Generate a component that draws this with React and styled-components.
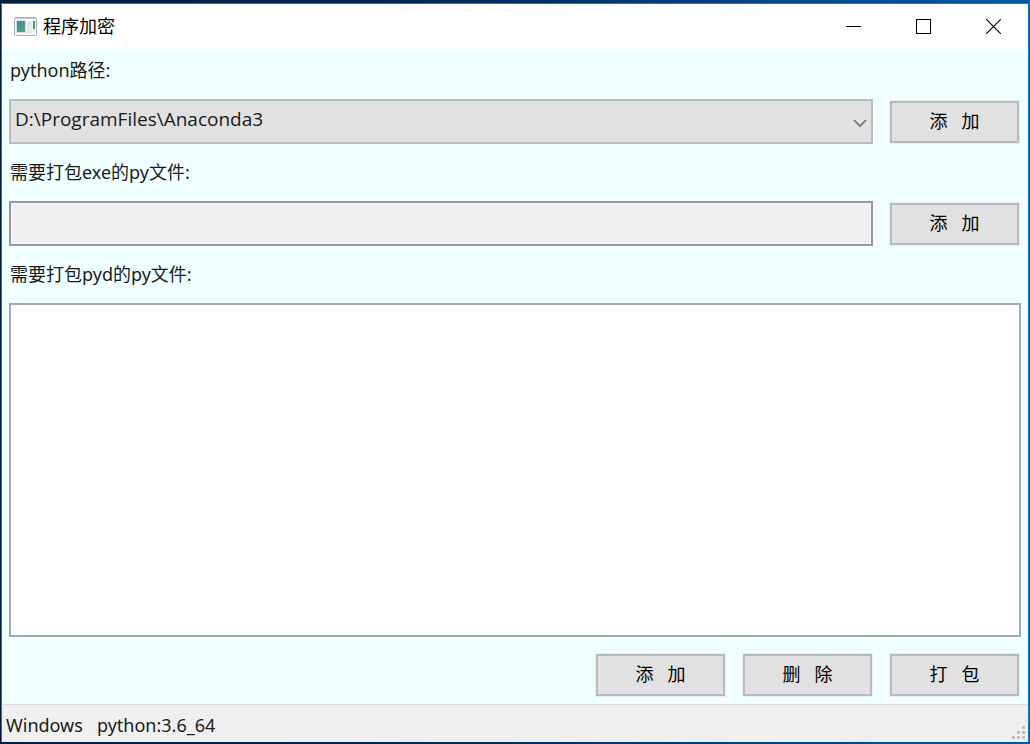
import React, { useState } from "react";
import styled, { createGlobalStyle } from "styled-components";

const GlobalStyle = createGlobalStyle`
  *, *::before, *::after { box-sizing: border-box; }
  body {
    margin: 0;
    color: #1a1a1a;
    font-family: "Noto Sans", "Noto Sans CJK SC", sans-serif;
    font-size: 18px;
    line-height: 24px;
  }
`;

const Desktop = styled.div`
  display: flex;
  min-height: 100vh;
  padding: 3px 1px 2px;
  background: linear-gradient(90deg, #001c40 0%, #002a58 45%, #00509a 88%, #0058a8 100%);
`;

const Window = styled.main`
  display: flex;
  flex: 1;
  flex-direction: column;
  min-width: 0;
  border: 1px solid #1877c9;
  border-bottom: 0;
  background: #f0ffff;
`;

const TitleBar = styled.header`
  display: flex;
  align-items: stretch;
  height: 46px;
  padding-bottom: 2px;
  background: #ffffff;
`;

const Title = styled.h1`
  display: flex;
  flex: 1;
  align-items: center;
  gap: 6px;
  margin: 0;
  padding-left: 12px;
  color: #000000;
  font-size: 18px;
  font-weight: 400;
`;

const CaptionButton = styled.button`
  display: flex;
  align-items: center;
  justify-content: center;
  width: 70px;
  padding: 0;
  border: 0;
  background: transparent;
  &:hover { background: ${(p) => (p.$danger ? "#e81123" : "#e5e5e5")}; }
`;

const Form = styled.form`
  display: flex;
  flex: 1;
  flex-direction: column;
  gap: 16px;
  padding: 8px 7px 7px;
`;

const Label = styled.label`
  padding-left: 1px;
  line-height: 25px;
`;

const Row = styled.div`
  display: flex;
  align-items: flex-end;
  justify-content: flex-end;
  gap: 16px;
  padding-right: 1px;
`;

const SelectWrap = styled.div`
  position: relative;
  display: flex;
  flex: 1;
  min-width: 0;
`;

const Select = styled.select`
  appearance: none;
  width: 100%;
  height: 45px;
  padding: 0 32px 6px 4px;
  border: 2px solid #b9bcbc;
  border-radius: 0;
  background: #e1e1e1;
  color: inherit;
  font-family: "Open Sans", "Noto Sans CJK SC", sans-serif;
  font-size: 19px;
`;

const Chevron = styled.svg`
  position: absolute;
  top: 20px;
  right: 6px;
  pointer-events: none;
`;

const TextField = styled.input`
  flex: 1;
  min-width: 0;
  height: 45px;
  padding: 0 5px;
  border: 2px solid #969a9c;
  border-radius: 0;
  background: #f0f0f0;
  box-shadow: inset 0 0 0 1px #f8f8f8;
  color: inherit;
  font: inherit;
`;

const FileList = styled.textarea`
  flex: 1;
  min-height: 120px;
  padding: 5px;
  border: 2px solid #a3aab1;
  border-radius: 0;
  background: #ffffff;
  color: inherit;
  font: inherit;
  resize: none;
`;

const PushButton = styled.button`
  width: 131px;
  height: 44px;
  padding: 0 0 2px;
  border: 1px solid #e8f1f1;
  background: #e1e1e1;
  box-shadow: inset 0 0 0 2px #bababa;
  color: #000000;
  font: inherit;
  white-space: pre;
  &:active { background: #cce4f7; }
`;

const StatusBar = styled.footer`
  display: flex;
  align-items: center;
  justify-content: space-between;
  height: 38px;
  padding: 2px 3px 0 4px;
  border-top: 1px solid #d9dede;
  background: #f0f0f0;
  white-space: pre;
`;

const Grip = styled.svg`
  align-self: flex-end;
  margin-bottom: 3px;
`;

function AppIcon() {
  return (
    <svg width="23" height="19" viewBox="0 0 23 19" aria-hidden="true">
      <defs>
        <linearGradient id="screen" x1="0" y1="0" x2="1" y2="1">
          <stop offset="0" stopColor="#4282a8" />
          <stop offset="1" stopColor="#57aa70" />
        </linearGradient>
      </defs>
      <rect x="0.5" y="0.5" width="22" height="18" rx="1" fill="#f5f6f7" stroke="#a9afb4" />
      <path d="M1 1.500H22" stroke="#c2c8cc" />
      <rect x="2.500" y="3.500" width="9" height="12" fill="url(#screen)" stroke="#d9e3e5" />
      <rect x="13" y="4" width="5" height="7" fill="#e6e8e9" />
      <rect x="13" y="12" width="5" height="4" fill="#e6e8e9" />
      <rect x="19" y="4" width="2" height="8" fill="url(#screen)" />
      <rect x="19" y="12" width="2" height="4" fill="#e6e8e9" />
    </svg>
  );
}

const gripDots = [[10, 0], [5, 5], [10, 5], [0, 10], [5, 10], [10, 10]];

export default function App() {
  const [target, setTarget] = useState("");
  const [files, setFiles] = useState("");

  return (
    <Desktop>
      <GlobalStyle />
      <Window>
        <TitleBar>
          <Title><AppIcon />程序加密</Title>
          <CaptionButton type="button" aria-label="最小化">
            <svg width="15" height="15" shapeRendering="crispEdges"><path d="M0 7.500H15" stroke="#000" /></svg>
          </CaptionButton>
          <CaptionButton type="button" aria-label="最大化">
            <svg width="15" height="15" shapeRendering="crispEdges"><rect x="0.5" y="0.5" width="14" height="14" fill="none" stroke="#000" /></svg>
          </CaptionButton>
          <CaptionButton type="button" aria-label="关闭" $danger>
            <svg width="15" height="15"><path d="M0 0L15 15M15 0L0 15" stroke="#000" strokeWidth="1.100" /></svg>
          </CaptionButton>
        </TitleBar>
        <Form onSubmit={(e) => e.preventDefault()}>
          <Label htmlFor="python-path">python路径:</Label>
          <Row>
            <SelectWrap>
              <Select id="python-path">
                <option>D:\ProgramFiles\Anaconda3</option>
              </Select>
              <Chevron width="14" height="9" viewBox="0 0 14 9" aria-hidden="true">
                <path d="M1 1L7 7L13 1" fill="none" stroke="#6a6a6a" strokeWidth="1.600" />
              </Chevron>
            </SelectWrap>
            <PushButton type="button">添   加</PushButton>
          </Row>
          <Label htmlFor="exe-file">需要打包exe的py文件:</Label>
          <Row>
            <TextField id="exe-file" type="text" value={target} onChange={(e) => setTarget(e.target.value)} />
            <PushButton type="button">添   加</PushButton>
          </Row>
          <Label htmlFor="pyd-files">需要打包pyd的py文件:</Label>
          <FileList id="pyd-files" value={files} onChange={(e) => setFiles(e.target.value)} />
          <Row>
            <PushButton type="button">添   加</PushButton>
            <PushButton type="button">删   除</PushButton>
            <PushButton type="submit">打   包</PushButton>
          </Row>
        </Form>
        <StatusBar>
          <span>Windows   python:3.6_64</span>
          <Grip width="13" height="13" viewBox="0 0 13 13" aria-hidden="true">
            {gripDots.map(([x, y]) => (
              <rect key={`${x}-${y}`} x={x} y={y} width="3" height="3" fill="#bfbfbf" />
            ))}
          </Grip>
        </StatusBar>
      </Window>
    </Desktop>
  );
}
